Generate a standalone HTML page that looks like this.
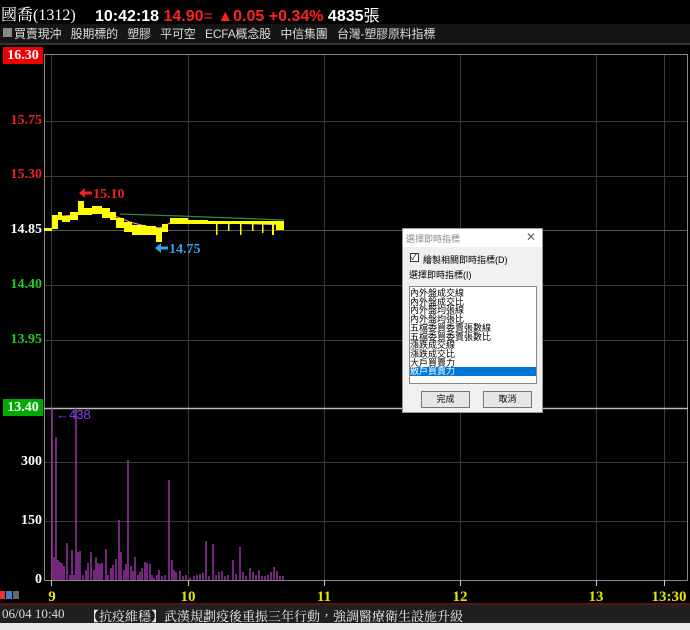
<!DOCTYPE html>
<html><head><meta charset="utf-8"><style>
*{margin:0;padding:0;box-sizing:border-box}
body{width:690px;height:630px;background:#000;overflow:hidden;position:relative;font-family:"Liberation Sans","Noto Sans CJK TC",sans-serif}
.abs{position:absolute;white-space:nowrap}
.lbl{position:absolute;font-family:"Liberation Serif","Noto Serif CJK SC",serif;font-weight:bold;font-size:14px;right:648px;text-align:right}
</style></head><body>
<div class="abs" style="left:0;top:0;width:690px;height:24px;background:#000"></div>
<div class="abs" style="left:1px;top:2px;font-size:16px;color:#fff;font-family:'Liberation Serif','Noto Serif CJK TC',serif">國喬(1312)</div>
<div class="abs" style="left:95px;top:2px;font-size:16px;font-weight:bold;color:#fff">10:42:18 <span style="color:#f22">14.90</span><span style="color:#f22;font-weight:normal">=</span> <span style="color:#f22">▲0.05 +0.34%</span> 4835<span style="font-weight:normal">張</span></div>
<div class="abs" style="left:0;top:24px;width:690px;height:19px;background:#151515"></div>
<div class="abs" style="left:3px;top:28px;width:9px;height:9px;background:#888"></div>
<div class="abs" style="left:14px;top:25px;font-size:12px;color:#ddd;letter-spacing:-0.2px">買賣現沖&nbsp;&nbsp;&nbsp;股期標的&nbsp;&nbsp;&nbsp;塑膠&nbsp;&nbsp;&nbsp;平可空&nbsp;&nbsp;&nbsp;ECFA概念股&nbsp;&nbsp;&nbsp;中信集團&nbsp;&nbsp;&nbsp;台灣-塑膠原料指標</div>
<div class="abs" style="left:0;top:43px;width:690px;height:2px;background:#333"></div>

<svg class="abs" style="left:0;top:0" width="690" height="630">
<g stroke="#3a3a3a" stroke-width="1">
<line x1="51.5" y1="54" x2="51.5" y2="580"/><line x1="188.5" y1="54" x2="188.5" y2="580"/><line x1="324.5" y1="54" x2="324.5" y2="580"/><line x1="460.5" y1="54" x2="460.5" y2="580"/><line x1="596.5" y1="54" x2="596.5" y2="580"/><line x1="664.5" y1="54" x2="664.5" y2="580"/>
<line x1="44" y1="121.5" x2="687" y2="121.5"/><line x1="44" y1="176.5" x2="687" y2="176.5"/><line x1="44" y1="230.5" x2="687" y2="230.5" stroke="#555"/><line x1="44" y1="285.5" x2="687" y2="285.5"/><line x1="44" y1="340.5" x2="687" y2="340.5"/>
<line x1="44" y1="462.5" x2="687" y2="462.5"/><line x1="44" y1="521.5" x2="687" y2="521.5"/>
</g>
<rect x="44.5" y="54.5" width="643" height="526" fill="none" stroke="#888"/>
<line x1="44" y1="408.5" x2="688" y2="408.5" stroke="#bbb" stroke-width="1.5"/>
<g stroke="#ccc"><line x1="51.5" y1="580" x2="51.5" y2="586"/><line x1="188.5" y1="580" x2="188.5" y2="586"/><line x1="324.5" y1="580" x2="324.5" y2="586"/><line x1="460.5" y1="580" x2="460.5" y2="586"/><line x1="596.5" y1="580" x2="596.5" y2="586"/><line x1="664.5" y1="580" x2="664.5" y2="586"/></g>
<polyline points="120,214 180,216 284,220" fill="none" stroke="#2e8b3e" stroke-width="1.2"/>
<polyline points="52,217 75,215 95,212 115,216 130,222 145,226 160,228 172,222 200,222 284,225" fill="none" stroke="#d8a0e8" stroke-width="1"/>
<g fill="#ff0">
<rect x="44" y="228" width="8" height="3"/>
<rect x="52" y="215" width="6" height="14"/><rect x="58" y="212" width="4" height="8"/><rect x="62" y="216" width="8" height="6"/><rect x="70" y="212" width="8" height="8"/>
<rect x="78" y="201" width="6" height="14"/><rect x="84" y="208" width="8" height="7"/><rect x="92" y="206" width="10" height="8"/><rect x="102" y="208" width="8" height="10"/><rect x="110" y="212" width="6" height="8"/>
<rect x="116" y="218" width="8" height="10"/><rect x="124" y="222" width="8" height="10"/><rect x="132" y="225" width="14" height="10"/><rect x="146" y="226" width="10" height="9"/><rect x="156" y="228" width="6" height="14"/><rect x="162" y="224" width="6" height="8"/>
<rect x="170" y="218" width="18" height="6"/><rect x="188" y="220" width="20" height="4"/><rect x="208" y="221" width="76" height="3"/>
<rect x="216" y="221" width="1.5" height="14"/><rect x="228" y="221" width="1.5" height="10"/><rect x="240" y="221" width="1.5" height="14"/><rect x="252" y="221" width="1.5" height="10"/><rect x="262" y="221" width="1.5" height="12"/><rect x="272" y="221" width="2" height="14"/><rect x="276" y="224" width="8" height="6"/>
</g>
<g fill="#e22"><polygon points="79,193 85,188 85,191.5 92,191.5 92,194.5 85,194.5 85,198"/></g>
<text x="93" y="198" fill="#e22" font-family="Liberation Serif" font-weight="bold" font-size="14">15.10</text>
<g fill="#2ea6e6"><polygon points="155,248 161,243 161,246.5 168,246.5 168,249.5 161,249.5 161,253"/></g>
<text x="169" y="253" fill="#2ea6e6" font-family="Liberation Serif" font-weight="bold" font-size="14">14.75</text>
<g stroke="#b03cc0" stroke-width="1.3">
<line x1="52" y1="580" x2="52" y2="408"/><line x1="56" y1="580" x2="56" y2="437"/><line x1="76" y1="580" x2="76" y2="408"/><line x1="128" y1="580" x2="128" y2="460"/><line x1="119" y1="580" x2="119" y2="520"/><line x1="169" y1="580" x2="169" y2="480"/><line x1="206" y1="580" x2="206" y2="541"/><line x1="213" y1="580" x2="213" y2="544"/><line x1="240" y1="580" x2="240" y2="547"/><line x1="233" y1="580" x2="233" y2="560"/>
<line x1="54" y1="580" x2="54" y2="557"/><line x1="58" y1="580" x2="58" y2="560"/><line x1="60" y1="580" x2="60" y2="562"/><line x1="62" y1="580" x2="62" y2="563"/><line x1="64" y1="580" x2="64" y2="566"/><line x1="67" y1="580" x2="67" y2="543"/><line x1="70" y1="580" x2="70" y2="575"/><line x1="72" y1="580" x2="72" y2="550"/><line x1="74" y1="580" x2="74" y2="575"/><line x1="78" y1="580" x2="78" y2="552"/><line x1="80" y1="580" x2="80" y2="551"/><line x1="83" y1="580" x2="83" y2="575"/><line x1="86" y1="580" x2="86" y2="570"/><line x1="88" y1="580" x2="88" y2="563"/><line x1="91" y1="580" x2="91" y2="552"/><line x1="94" y1="580" x2="94" y2="570"/><line x1="96" y1="580" x2="96" y2="557"/><line x1="98" y1="580" x2="98" y2="563"/><line x1="100" y1="580" x2="100" y2="564"/><line x1="102" y1="580" x2="102" y2="563"/><line x1="106" y1="580" x2="106" y2="549"/><line x1="108" y1="580" x2="108" y2="575"/><line x1="111" y1="580" x2="111" y2="568"/><line x1="113" y1="580" x2="113" y2="565"/><line x1="116" y1="580" x2="116" y2="559"/><line x1="121" y1="580" x2="121" y2="552"/><line x1="124" y1="580" x2="124" y2="570"/><line x1="126" y1="580" x2="126" y2="564"/><line x1="131" y1="580" x2="131" y2="566"/><line x1="133" y1="580" x2="133" y2="571"/><line x1="135" y1="580" x2="135" y2="557"/><line x1="138" y1="580" x2="138" y2="575"/><line x1="140" y1="580" x2="140" y2="572"/><line x1="142" y1="580" x2="142" y2="568"/><line x1="145" y1="580" x2="145" y2="562"/><line x1="147" y1="580" x2="147" y2="563"/><line x1="150" y1="580" x2="150" y2="564"/><line x1="152" y1="580" x2="152" y2="575"/><line x1="154" y1="580" x2="154" y2="578"/><line x1="157" y1="580" x2="157" y2="575"/><line x1="159" y1="580" x2="159" y2="570"/><line x1="162" y1="580" x2="162" y2="576"/><line x1="165" y1="580" x2="165" y2="575"/><line x1="172" y1="580" x2="172" y2="560"/><line x1="174" y1="580" x2="174" y2="570"/><line x1="176" y1="580" x2="176" y2="572"/><line x1="180" y1="580" x2="180" y2="571"/><line x1="183" y1="580" x2="183" y2="576"/><line x1="186" y1="580" x2="186" y2="575"/><line x1="190" y1="580" x2="190" y2="578"/><line x1="194" y1="580" x2="194" y2="576"/><line x1="197" y1="580" x2="197" y2="575"/><line x1="200" y1="580" x2="200" y2="574"/><line x1="203" y1="580" x2="203" y2="573"/><line x1="209" y1="580" x2="209" y2="576"/><line x1="216" y1="580" x2="216" y2="575"/><line x1="219" y1="580" x2="219" y2="572"/><line x1="222" y1="580" x2="222" y2="571"/><line x1="225" y1="580" x2="225" y2="576"/><line x1="228" y1="580" x2="228" y2="575"/><line x1="236" y1="580" x2="236" y2="574"/><line x1="243" y1="580" x2="243" y2="572"/><line x1="246" y1="580" x2="246" y2="576"/><line x1="250" y1="580" x2="250" y2="568"/><line x1="253" y1="580" x2="253" y2="572"/><line x1="256" y1="580" x2="256" y2="575"/><line x1="259" y1="580" x2="259" y2="570"/><line x1="262" y1="580" x2="262" y2="576"/><line x1="265" y1="580" x2="265" y2="576"/><line x1="268" y1="580" x2="268" y2="575"/><line x1="271" y1="580" x2="271" y2="572"/><line x1="274" y1="580" x2="274" y2="567"/><line x1="277" y1="580" x2="277" y2="571"/><line x1="280" y1="580" x2="280" y2="576"/><line x1="283" y1="580" x2="283" y2="576"/>
</g>
<text x="56" y="419" fill="#8a3cf0" font-size="13" font-family="Liberation Sans">←438</text>
<g fill="#e6e600" font-family="Liberation Serif" font-weight="bold" font-size="15" text-anchor="middle">
<text x="52" y="601">9</text><text x="188" y="601">10</text><text x="324" y="601">11</text><text x="460" y="601">12</text><text x="596" y="601">13</text><text x="669" y="601">13:30</text></g>
<rect x="0" y="591" width="5" height="8" fill="#e33"/><rect x="6" y="591" width="6" height="8" fill="#4a7ad0"/><rect x="13" y="591" width="6" height="8" fill="#666"/>
</svg>

<div class="abs" style="left:3px;top:47px;width:40px;height:17px;background:#e00;color:#fff;font-family:'Liberation Serif',serif;font-weight:bold;font-size:14px;text-align:center;line-height:17px">16.30</div>
<div class="lbl" style="top:113px;color:#e22">15.75</div>
<div class="lbl" style="top:167px;color:#e22">15.30</div>
<div class="lbl" style="top:222px;color:#fff">14.85</div>
<div class="lbl" style="top:277px;color:#2c2">14.40</div>
<div class="lbl" style="top:332px;color:#2c2">13.95</div>
<div class="abs" style="left:3px;top:399px;width:40px;height:17px;background:#0a0;color:#fff;font-family:'Liberation Serif',serif;font-weight:bold;font-size:14px;text-align:center;line-height:17px">13.40</div>
<div class="lbl" style="top:454px;color:#fff">300</div>
<div class="lbl" style="top:513px;color:#fff">150</div>
<div class="lbl" style="top:572px;color:#fff">0</div>

<div class="abs" style="left:0;top:603px;width:690px;height:2px;background:#5a1010"></div>
<div class="abs" style="left:0;top:605px;width:690px;height:18px;background:#202020"></div>
<div class="abs" style="left:2px;top:606px;font-size:13px;color:#ddd;font-family:'Liberation Serif','Noto Serif CJK TC',serif">06/04 10:40</div>
<div class="abs" style="left:86px;top:606px;font-size:13px;color:#eee;font-family:'Liberation Serif','Noto Serif CJK TC',serif">【抗疫維穩】武漢規劃疫後重振三年行動，強調醫療衛生設施升級</div>
<div class="abs" style="left:0;top:623px;width:690px;height:7px;background:#e8e8e8"></div>

<div class="abs" style="left:402px;top:228px;width:141px;height:185px;background:#f0f0f0;border:1px solid #999;font-size:9px;color:#000">
<div style="height:18px;background:#fff;color:#888;padding:3px 0 0 3px">選擇即時指標<span style="position:absolute;right:6px;top:1px;font-size:12px;color:#666">✕</span></div>
<div style="position:absolute;left:7px;top:24px;width:9px;height:9px;border:1px solid #333;background:#fff;font-size:8px;line-height:7px">✓</div>
<div style="position:absolute;left:20px;top:24px">繪製相關即時指標(D)</div>
<div style="position:absolute;left:6px;top:39px">選擇即時指標(I)</div>
<div style="position:absolute;left:6px;top:57px;width:128px;height:98px;background:#fff;border:1px solid #888;line-height:8.7px;font-size:9px;padding-top:2px">
<div>內外盤成交線</div><div>內外盤成交比</div><div>內外盤均張線</div><div>內外盤均張比</div><div>五檔委買委賣張數線</div><div>五檔委買委賣張數比</div><div>漲跌成交線</div><div>漲跌成交比</div><div>大戶買賣力</div><div style="background:#0078d7;color:#fff">散戶買賣力</div></div>
<div style="position:absolute;left:18px;top:162px;width:49px;height:17px;border:1px solid #777;background:#e6e6e6;text-align:center;line-height:15px">完成</div>
<div style="position:absolute;left:80px;top:162px;width:49px;height:17px;border:1px solid #777;background:#e6e6e6;text-align:center;line-height:15px">取消</div>
</div>
</body></html>
